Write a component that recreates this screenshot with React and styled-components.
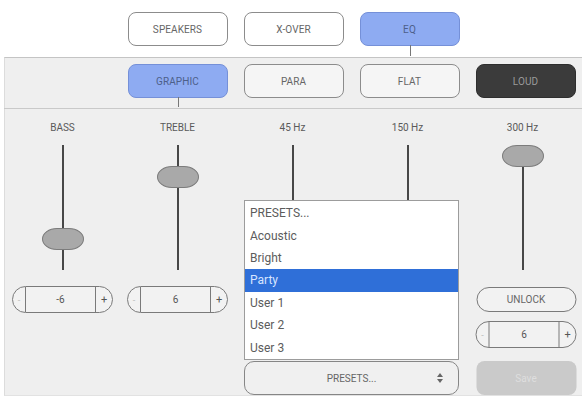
import React from "react";
import styled, { createGlobalStyle, css } from "styled-components";

const Global = createGlobalStyle`
  html, body { margin: 0; padding: 0; background: #ffffff; }
  body { font-family: Roboto, "Liberation Sans", Arial, sans-serif; width: 582px; height: 401px; overflow: hidden; }
  * { box-sizing: border-box; }
`;

const Page = styled.div`
  width: 582px;
  height: 401px;
  display: flex;
  flex-direction: column;
  background: #ffffff;
`;

const TopBar = styled.div`
  height: 57px;
  display: grid;
  grid-template-columns: repeat(5, 116px);
  align-items: start;
  padding: 12px 0 0 3.5px;
`;

const Panel = styled.div`
  margin-left: 4px;
  flex: 0 0 338px;
  background: #efefef;
  border-top: 1px solid #c4c4c4;
  border-left: 1px solid #dcdcdc;
  border-bottom: 1px solid #e2e2e2;
  display: flex;
  flex-direction: column;
`;

const SubBar = styled.div`
  height: 51px;
  display: grid;
  grid-template-columns: repeat(5, 116px);
  align-items: start;
  padding: 6px 0 0 0;
  margin-left: -1.5px;
  border-bottom: 1px solid #c9c9c9;
`;

const Tab = styled.div`
  position: relative;
  justify-self: center;
  width: 100px;
  height: 34px;
  border-radius: 8px;
  border: 1px solid #8c8c8c;
  background: #ffffff;
  color: #666;
  font-size: 10px;
  letter-spacing: 0.1px;
  display: flex;
  align-items: center;
  justify-content: center;
  grid-column: ${(p) => p.col};
  ${(p) =>
    p.active &&
    css`
      background: #8eabf2;
      border-color: #7590d8;
      color: #4d5f8a;
      &::after {
        content: "";
        position: absolute;
        left: 50%;
        top: 100%;
        width: 1.5px;
        height: ${p.stem}px;
        background: #777;
      }
    `}
  ${(p) =>
    p.dark &&
    css`
      background: #3b3b3b;
      border-color: #2e2e2e;
      color: #9a9a9a;
    `}
  ${(p) =>
    p.muted &&
    css`
      background: #f5f5f5;
    `}
`;

const EqArea = styled.div`
  position: relative;
  display: grid;
  grid-template-columns: repeat(5, 115px);
  grid-template-rows: 36px 125px 46px 39px 40px;
`;

const Label = styled.div`
  grid-column: ${(p) => p.col};
  grid-row: 1;
  justify-self: center;
  padding-top: 12px;
  font-size: 10px;
  line-height: 14px;
  color: #5a5a5a;
`;

const Slider = styled.div`
  grid-column: ${(p) => p.col};
  grid-row: 2;
  position: relative;
  justify-self: center;
  width: 44px;
  height: 125px;
  &::before {
    content: "";
    position: absolute;
    left: 21px;
    top: ${(p) => p.trackTop || 0}px;
    bottom: 0;
    width: 2px;
    background: #474747;
  }
`;

const Thumb = styled.div`
  position: absolute;
  left: 1px;
  width: 42px;
  height: 22px;
  border-radius: 15px / 11px;
  background: #a9a9a9;
  border: 1px solid #7c7c7c;
`;

const Cell = styled.div`
  grid-column: ${(p) => p.col};
  grid-row: ${(p) => p.row};
  justify-self: center;
  padding-top: ${(p) => p.pad}px;
  ${(p) => p.shift && css`transform: translateX(${p.shift}px);`}
`;

const Spin = styled.div`
  width: 101px;
  height: 27px;
  border: 1px solid #7a7a7a;
  border-radius: 14px;
  display: grid;
  grid-template-columns: 13px 1fr 17px;
  background: #f2f2f2;
  font-size: 10px;
  color: #555;
`;

const SpinEnd = styled.div`
  display: flex;
  align-items: center;
  justify-content: center;
  color: ${(p) => (p.faint ? "#bbb" : "#555")};
  ${(p) => (p.side === "left" ? "border-right" : "border-left")}: 1px solid #7a7a7a;
  font-size: ${(p) => (p.faint ? 9 : 11)}px;
`;

const SpinValue = styled.div`
  display: flex;
  align-items: center;
  justify-content: center;
`;

const Pill = styled.div`
  width: 100px;
  height: 25px;
  border: 1px solid #7a7a7a;
  border-radius: 13px;
  display: flex;
  align-items: center;
  justify-content: center;
  font-size: 10px;
  color: #666;
  background: #f2f2f2;
`;

const SaveButton = styled.div`
  width: 100px;
  height: 34px;
  border-radius: 8px;
  background: #cacaca;
  color: #dedede;
  font-size: 10px;
  display: flex;
  align-items: center;
  justify-content: center;
`;

const Select = styled.div`
  grid-column: 3 / span 2;
  grid-row: 5;
  justify-self: start;
  margin: 6px 0 0 9px;
  width: 215px;
  height: 34px;
  border: 1px solid #868686;
  border-radius: 10px;
  background: #f0f0f0;
  display: grid;
  grid-template-columns: 1fr 22px;
  align-items: center;
  font-size: 10px;
  color: #666;
`;

const SelectText = styled.span`
  text-align: center;
  padding-left: 22px;
`;

const Popup = styled.div`
  position: absolute;
  left: 239px;
  top: 91px;
  width: 215px;
  height: 160px;
  background: #ffffff;
  border: 1px solid #9c9c9c;
  padding-top: 1px;
  display: flex;
  flex-direction: column;
`;

const Option = styled.div`
  height: 22.5px;
  display: flex;
  align-items: center;
  padding-left: 5px;
  font-size: 12px;
  color: #5c5c5c;
  ${(p) =>
    p.selected &&
    css`
      background: #2f6fd8;
      color: #d7e4ff;
    `}
`;

const Arrows = () => (
  <svg width="8" height="12" viewBox="0 0 8 12">
    <path d="M4 1 L7 5 L1 5 Z" fill="#666" />
    <path d="M4 11 L7 7 L1 7 Z" fill="#666" />
  </svg>
);

const SpinBox = ({ value }) => (
  <Spin>
    <SpinEnd side="left" faint>-</SpinEnd>
    <SpinValue>{value}</SpinValue>
    <SpinEnd side="right">+</SpinEnd>
  </Spin>
);

// Bands whose controls sit under the open preset list carry no control row.
const bands = [
  { label: "BASS", thumb: 83, value: "-6", controls: "spin" },
  { label: "TREBLE", thumb: 21, value: "6", controls: "spin" },
  { label: "45 Hz", thumb: 82 },
  { label: "150 Hz", thumb: 82 },
  { label: "300 Hz", thumb: 0, value: "6", controls: "lock", trackTop: 11 },
];

const presets = ["PRESETS...", "Acoustic", "Bright", "Party", "User 1", "User 2", "User 3"];

export default function App() {
  return (
    <Page>
      <Global />
      <TopBar>
        <Tab col={2}>SPEAKERS</Tab>
        <Tab col={3}>X-OVER</Tab>
        <Tab col={4} active stem={11}>EQ</Tab>
      </TopBar>
      <Panel>
        <SubBar>
          <Tab col={2} active stem={10}>GRAPHIC</Tab>
          <Tab col={3} muted>PARA</Tab>
          <Tab col={4} muted>FLAT</Tab>
          <Tab col={5} dark>LOUD</Tab>
        </SubBar>
        <EqArea>
          {bands.map((b, i) => (
            <React.Fragment key={b.label}>
              <Label col={i + 1}>{b.label}</Label>
              <Slider col={i + 1} trackTop={b.trackTop}>
                <Thumb style={{ top: b.thumb }} />
              </Slider>
              {b.controls === "lock" && (
                <>
                  <Cell col={i + 1} row={3} pad={17} shift={3.5}>
                    <Pill>UNLOCK</Pill>
                  </Cell>
                  <Cell col={i + 1} row={4} pad={5} shift={3.5}>
                    <SpinBox value={b.value} />
                  </Cell>
                </>
              )}
              {b.controls === "spin" && (
                <Cell col={i + 1} row={3} pad={16}>
                  <SpinBox value={b.value} />
                </Cell>
              )}
            </React.Fragment>
          ))}
          <Select>
            <SelectText>PRESETS...</SelectText>
            <Arrows />
          </Select>
          <Cell col={5} row={5} pad={6} shift={3.5}>
            <SaveButton>Save</SaveButton>
          </Cell>
          <Popup>
            {presets.map((p) => (
              <Option key={p} selected={p === "Party"}>
                {p}
              </Option>
            ))}
          </Popup>
        </EqArea>
      </Panel>
    </Page>
  );
}
